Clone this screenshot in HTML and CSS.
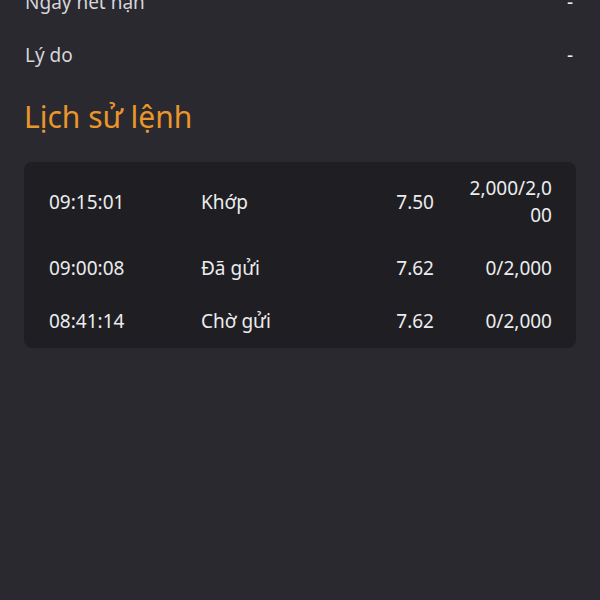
FILE: index.html
```html
<!DOCTYPE html>
<html lang="vi">
<head>
<meta charset="utf-8">
<link rel="stylesheet" href="styles.css">
</head>
<body>
<div class="page">
  <div class="info">
    <div class="info-row"><span class="label">Ngày hết hạn</span><span class="value">-</span></div>
    <div class="info-row"><span class="label">Lý do</span><span class="value">-</span></div>
  </div>
  <h2 class="title">Lịch sử lệnh</h2>
  <div class="card">
    <div class="row">
      <div class="c time">09:15:01</div>
      <div class="c status">Khớp</div>
      <div class="c price">7.50</div>
      <div class="c qty">2,000/2,000</div>
    </div>
    <div class="row">
      <div class="c time">09:00:08</div>
      <div class="c status">Đã gửi</div>
      <div class="c price">7.62</div>
      <div class="c qty">0/2,000</div>
    </div>
    <div class="row">
      <div class="c time">08:41:14</div>
      <div class="c status">Chờ gửi</div>
      <div class="c price">7.62</div>
      <div class="c qty">0/2,000</div>
    </div>
  </div>
</div>
</body>
</html>
```
FILE: styles.css
```css
html, body {
  margin: 0;
  padding: 0;
  background: #29292f;
  height: 100%;
  overflow: hidden;
}
body {
  font-family: "Noto Sans", "Open Sans", sans-serif;
  color: #ececee;
}
.page {
  padding: 0 25px;
  margin-top: -24px;
}
.info-row {
  display: flex;
  justify-content: space-between;
  align-items: center;
  height: 53px;
  font-size: 19px;
  line-height: 27px;
  color: #d6d6da;
}
.value {
  color: #ececee;
  padding-right: 2px;
}
.title {
  margin: 15px 0 0 -1px;
  font-weight: 400;
  font-size: 30px;
  line-height: 40px;
  color: #eb962a;
}
.card {
  margin: 25px -1px 0 -1px;
  background: #1f1f23;
  border-radius: 8px;
  overflow: hidden;
}
.row {
  display: grid;
  grid-template-columns: 152px 1fr 112px 118px;
  padding: 0 24px 0 25px;
  font-size: 19px;
  line-height: 27px;
}
.c {
  padding: 13px 0;
  display: flex;
  align-items: center;
}
.price {
  justify-content: flex-end;
}
.qty {
  justify-content: flex-end;
  text-align: right;
  word-break: break-all;
  padding-left: 32px;
}
```
